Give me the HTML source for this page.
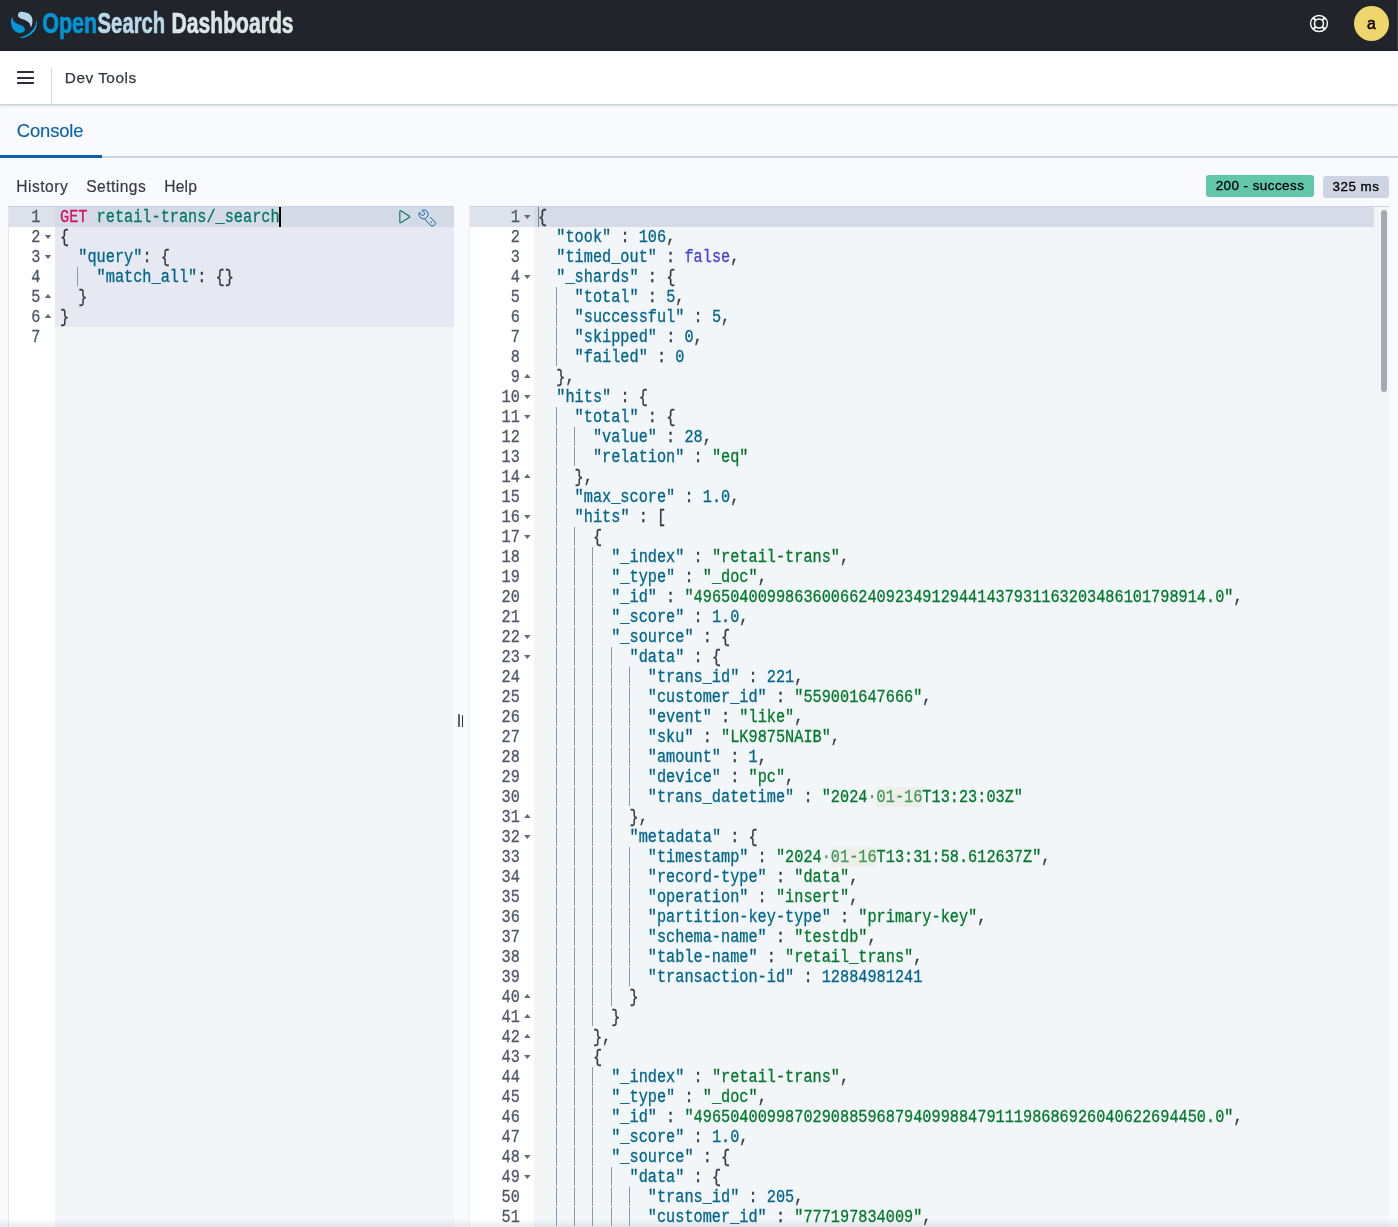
<!DOCTYPE html>
<html lang="en"><head><meta charset="utf-8"><title>Dev Tools - OpenSearch Dashboards</title>
<style>
*{box-sizing:border-box;margin:0;padding:0}
html,body{width:1398px;height:1227px;overflow:hidden;background:#f9fafd}
body{position:relative;font-family:"Liberation Sans",sans-serif;color:#343741}
#root{position:absolute;left:0;top:0;width:1398px;height:1227px;overflow:hidden;will-change:transform}
.abs{position:absolute}
#hdr{position:absolute;left:0;top:0;width:1398px;height:51px;background:#21242b;border-bottom:1px solid #16181d}
#bar{position:absolute;left:0;top:51px;width:1398px;height:53px;background:#fff;box-shadow:0 1px 2px rgba(152,162,179,.55),0 2px 3px rgba(152,162,179,.18)}
#burger i{position:absolute;left:17px;width:17px;height:2.35px;background:#2b2e38;display:block;border-radius:.4px}
#vdiv{position:absolute;left:51px;top:68px;width:1px;height:36px;background:#d3dae6}
.t{position:absolute;white-space:nowrap;line-height:1}
#tabline{position:absolute;left:0;top:156px;width:1398px;height:2px;background:#cdd4e1}
#tabsel{position:absolute;left:0;top:155px;width:102px;height:3px;background:#0a5fa8}
.badge{position:absolute;border-radius:3px;font-size:13.4px;color:#000;white-space:nowrap;line-height:1;text-align:center}
.mono,.ln,.gn{font-family:"Liberation Mono",monospace;font-size:18px;line-height:20px;height:20px;white-space:pre}
.ln{position:absolute;transform:scaleX(0.84708);transform-origin:0 0;padding-top:1.4px;color:#343741}
.gn{position:absolute;text-align:right;color:#4f5868;padding-top:1.4px;transform:scaleX(0.84708);transform-origin:100% 0}
.ln,.gn{-webkit-text-stroke:0.3px currentColor}
.gni{display:inline-block}
.k{color:#00658c}.s{color:#01782b}.n{color:#00658c}.b{color:#4a3fd6}.p{color:#343741}
.qk{color:#005c82}.qs{color:#017026}
.m{color:#d40f66}.u{color:#00776b}
.hl{background:#eeeeea;color:#3f9a57}.hd{color:#4a9c5f}
.ig{position:absolute;width:1px;height:19px;background:#8f96aa}
.fd{position:absolute;width:6.6px;height:4px;background:#6a6a6d;clip-path:polygon(0 0,100% 0,50% 100%)}
.fu{position:absolute;width:6.6px;height:4px;background:#6a6a6d;clip-path:polygon(0 100%,100% 100%,50% 0)}
</style></head>
<body>
<div id="root">
<div id="hdr"></div>

<svg class="abs" style="left:0;top:0" width="320" height="51" viewBox="0 0 320 51">
  <!-- mark -->
  <path d="M17.90 15.30 C17.78 14.38 18.50 13.20 19.20 12.60 C19.90 12.00 20.68 11.62 22.10 11.70 C23.52 11.78 26.22 12.42 27.70 13.10 C29.18 13.78 30.22 14.75 31.00 15.80 C31.78 16.85 32.20 18.12 32.40 19.40 C32.60 20.68 32.45 22.23 32.20 23.50 C31.95 24.77 31.35 27.03 30.90 27.00 C30.45 26.97 30.35 24.38 29.50 23.30 C28.65 22.23 27.40 21.42 25.80 20.55 C24.20 19.68 21.22 18.98 19.90 18.10 C18.58 17.23 18.02 16.22 17.90 15.30 Z" fill="#b4d6ea"/>
  <path d="M12.35 17.20 C11.82 17.30 10.93 20.35 10.90 22.10 C10.88 23.85 11.52 26.18 12.20 27.70 C12.88 29.22 13.87 30.33 15.00 31.20 C16.13 32.07 17.62 32.72 19.00 32.90 C20.38 33.08 22.32 32.87 23.30 32.30 C24.28 31.73 24.90 30.48 24.90 29.50 C24.90 28.52 24.38 27.27 23.30 26.40 C22.22 25.53 19.94 25.12 18.40 24.30 C16.86 23.48 15.06 22.68 14.05 21.50 C13.04 20.32 12.88 17.10 12.35 17.20 Z" fill="#0096d8"/>
  <path d="M36.90 20.90 C36.83 22.13 36.80 26.43 35.90 28.60 C35.00 30.77 33.15 32.50 31.50 33.90 C29.85 35.30 27.82 36.32 26.00 37.00 C24.18 37.68 21.45 37.98 20.60 38.00 C19.75 38.02 20.08 37.52 20.90 37.10 C21.72 36.68 23.95 36.28 25.50 35.50 C27.05 34.72 28.73 33.68 30.20 32.40 C31.67 31.12 33.28 29.67 34.30 27.80 C35.32 25.93 35.87 22.35 36.30 21.20 C36.73 20.05 36.97 19.67 36.90 20.90 Z" fill="#00a3e4"/>
  <g font-family="Liberation Sans, sans-serif" font-weight="bold" font-size="30.2" stroke-width="0.7" stroke-linejoin="round">
    <text x="42.2" y="32.7" fill="#0096d6" stroke="#0096d6" textLength="55" lengthAdjust="spacingAndGlyphs">Open</text>
    <text x="97.6" y="32.7" fill="#b9d9eb" stroke="#b9d9eb" textLength="67.6" lengthAdjust="spacingAndGlyphs">Search</text>
    <text x="171.6" y="32.7" fill="#dfe5e6" stroke="#dfe5e6" textLength="122" lengthAdjust="spacingAndGlyphs">Dashboards</text>
  </g>
</svg>


<svg class="abs" style="left:1308px;top:13px" width="22" height="22" viewBox="0 0 22 22" fill="none" stroke="#fff">
  <ellipse cx="11" cy="10.5" rx="8.45" ry="8.0" stroke-width="1.35"/>
  <circle cx="11" cy="10.5" r="4.5" stroke-width="1.5"/>
  <path d="M14.54 14.04 L16.66 16.16 M7.46 14.04 L5.34 16.16 M7.46 6.96 L5.34 4.84 M14.54 6.96 L16.66 4.84" stroke-width="2.1"/>
</svg>

<div class="abs" style="left:1353.7px;top:5.7px;width:35.6px;height:35.6px;border-radius:50%;background:#f0d46c"></div>
<div class="t" id="ava" style="left:1367px;top:16.45px;font-size:15.9px;color:#000;-webkit-text-stroke:.5px #000">a</div>
<div class="abs" style="left:1397px;top:0;width:1px;height:50px;background:#3b3e45"></div>
<div id="bar"></div>
<div id="burger"><i style="top:71px"></i><i style="top:76.55px"></i><i style="top:82.1px"></i></div>
<div id="vdiv"></div>
<div class="t" id="devtools" style="left:64.8px;top:70.15px;font-size:15.4px;color:#343741;letter-spacing:0.5px;-webkit-text-stroke:.25px #343741">Dev Tools</div>
<div id="tabline"></div><div id="tabsel"></div>
<div class="t" id="console" style="left:16.8px;top:121.6px;font-size:18.4px;letter-spacing:-.12px;color:#0a62ad;-webkit-text-stroke:.15px #0a62ad">Console</div>
<div class="t" id="tHistory" style="left:16.2px;top:178.8px;font-size:15.6px;letter-spacing:.5px;-webkit-text-stroke:.15px #343741">History</div>
<div class="t" id="tSettings" style="left:86.2px;top:178.8px;font-size:15.6px;letter-spacing:.45px;-webkit-text-stroke:.15px #343741">Settings</div>
<div class="t" id="tHelp" style="left:164.2px;top:178.8px;font-size:15.6px;letter-spacing:.2px;-webkit-text-stroke:.15px #343741">Help</div>
<div class="badge" id="b1" style="left:1206px;top:175px;width:108px;height:22px;background:#62c6ab;padding-top:4.2px;letter-spacing:.46px;-webkit-text-stroke:.3px #000">200 - success</div>
<div class="badge" id="b2" style="left:1323px;top:176px;width:66px;height:22px;background:#ced4e2;padding-top:4.2px;letter-spacing:.48px;-webkit-text-stroke:.3px #000">325 ms</div>
<div class="abs" style="left:8px;top:206px;width:446px;height:1021px;background:#f3f6f9"></div>
<div class="abs" style="left:8px;top:206px;width:47px;height:1021px;background:#fff"></div>
<div class="abs" style="left:55px;top:206px;width:399px;height:120.9px;background:#e6e9f1"></div>
<div class="abs" style="left:8px;top:206px;width:47px;height:20.7px;background:#dde1ea"></div>
<div class="abs" style="left:55px;top:206px;width:399px;height:20.7px;background:#d4dae6"></div>
<div class="abs" style="left:8px;top:206px;width:446px;height:1px;background:#cbd2df"></div>
<div class="abs" style="left:8px;top:207px;width:1px;height:1020px;background:#e3e7ef"></div>
<div class="gn" style="top:206px;left:8.00px;width:32.50px">1</div>
<div class="ln" style="top:206px;left:59.90px"><span class="m">GET</span> <span class="u">retail-trans/_search</span></div>
<div class="gn" style="top:226px;left:8.00px;width:32.50px">2</div>
<div class="fd" style="left:44.70px;top:234.90px"></div>
<div class="ln" style="top:226px;left:59.90px"><span class="p">{</span></div>
<div class="gn" style="top:246px;left:8.00px;width:32.50px">3</div>
<div class="fd" style="left:44.70px;top:254.90px"></div>
<div class="ln" style="top:246px;left:59.90px">  <span class="qk">"</span><span class="k">query</span><span class="qk">"</span><span class="p">: </span><span class="p">{</span></div>
<div class="gn" style="top:266px;left:8.00px;width:32.50px">4</div>
<div class="ln" style="top:266px;left:59.90px">    <span class="qk">"</span><span class="k">match_all</span><span class="qk">"</span><span class="p">: </span><span class="p">{</span><span class="p">}</span></div>
<div class="ig" style="left:77px;top:267px"></div>
<div class="gn" style="top:286px;left:8.00px;width:32.50px">5</div>
<div class="fu" style="left:44.70px;top:293.90px"></div>
<div class="ln" style="top:286px;left:59.90px">  <span class="p">}</span></div>
<div class="gn" style="top:306px;left:8.00px;width:32.50px">6</div>
<div class="fu" style="left:44.70px;top:313.90px"></div>
<div class="ln" style="top:306px;left:59.90px"><span class="p">}</span></div>
<div class="gn" style="top:326px;left:8.00px;width:32.50px">7</div>
<div class="abs" style="left:279.00px;top:206.5px;width:1.6px;height:20px;background:#000"></div>

<svg class="abs" style="left:396px;top:207px" width="18" height="19" viewBox="0 0 18 19" fill="none" stroke="#00776c" stroke-width="1.15" stroke-linejoin="round">
  <path d="M3.85 4.7 Q3.85 3.1 5.2 3.95 L13.1 8.95 Q14.3 9.7 13.1 10.45 L5.2 15.45 Q3.85 16.3 3.85 14.7 Z"/>
</svg>
<svg class="abs" style="left:417px;top:208px" width="20" height="20" viewBox="-1 -1 20 20" fill="none" stroke="#0a64b0" stroke-width="1.0" stroke-linecap="round" stroke-linejoin="round">
  <path d="M1.90 3.70 C1.53 3.45 1.26 3.80 1.10 4.20 C0.94 4.60 0.67 5.30 0.95 6.10 C1.23 6.90 1.94 8.37 2.80 9.00 C3.66 9.63 5.02 10.07 6.10 9.90 C7.18 9.73 8.62 8.82 9.30 8.00 C9.98 7.18 10.32 6.00 10.20 5.00 C10.08 4.00 9.35 2.67 8.60 2.00 C7.85 1.33 6.50 1.00 5.70 0.95 C4.90 0.90 3.87 1.44 3.80 1.70 C3.73 1.96 4.85 2.07 5.30 2.50 C5.75 2.93 6.37 3.75 6.50 4.30 C6.63 4.85 6.42 5.45 6.10 5.80 C5.78 6.15 5.07 6.42 4.60 6.40 C4.13 6.38 3.75 6.15 3.30 5.70 C2.85 5.25 2.27 3.95 1.90 3.70 Z"/>
  <path d="M7.2 10.6 L12.9 16.7 C14.2 17.5 16.2 17.0 17.0 15.4 C17.5 14.4 17.4 13.6 16.95 13.0 L12.3 8.35"/>
  <circle cx="13.15" cy="13.3" r="0.8" fill="#0a64b0" stroke="none"/>
</svg>

<div class="abs" style="left:469px;top:206px;width:1px;height:1021px;background:#e9edf3"></div>
<div class="abs" style="left:458.1px;top:714.2px;width:1.9px;height:12.8px;background:#60646e;border-radius:.6px"></div>
<div class="abs" style="left:461.8px;top:714.6px;width:1.4px;height:12.6px;background:#2d313b;border-radius:.6px"></div>
<div class="abs" style="left:470px;top:206px;width:919px;height:1021px;background:#f3f6f9"></div>
<div class="abs" style="left:470px;top:206px;width:64.3px;height:1021px;background:#fff"></div>
<div class="abs" style="left:470px;top:206px;width:64.3px;height:20.7px;background:#dfe3ec"></div>
<div class="abs" style="left:534.3px;top:206px;width:839.7px;height:20.7px;background:#d6dbe7"></div>
<div class="abs" style="left:470px;top:206px;width:919px;height:1px;background:#cbd2df"></div>
<div class="abs" style="left:538.3px;top:206.5px;width:1.2px;height:20px;background:#7d828e"></div>
<div class="gn" style="top:206px;left:470.00px;width:49.80px">1</div>
<div class="fd" style="left:524.00px;top:214.90px"></div>
<div class="ln" style="top:206px;left:538.00px"><span class="p">{</span></div>
<div class="gn" style="top:226px;left:470.00px;width:49.80px">2</div>
<div class="ln" style="top:226px;left:538.00px">  <span class="qk">"</span><span class="k">took</span><span class="qk">"</span><span class="p"> : </span><span class="n">106</span><span class="p">,</span></div>
<div class="gn" style="top:246px;left:470.00px;width:49.80px">3</div>
<div class="ln" style="top:246px;left:538.00px">  <span class="qk">"</span><span class="k">timed_out</span><span class="qk">"</span><span class="p"> : </span><span class="b">false</span><span class="p">,</span></div>
<div class="gn" style="top:266px;left:470.00px;width:49.80px">4</div>
<div class="fd" style="left:524.00px;top:274.90px"></div>
<div class="ln" style="top:266px;left:538.00px">  <span class="qk">"</span><span class="k">_shards</span><span class="qk">"</span><span class="p"> : </span><span class="p">{</span></div>
<div class="gn" style="top:286px;left:470.00px;width:49.80px">5</div>
<div class="ln" style="top:286px;left:538.00px">    <span class="qk">"</span><span class="k">total</span><span class="qk">"</span><span class="p"> : </span><span class="n">5</span><span class="p">,</span></div>
<div class="ig" style="left:556px;top:287px"></div>
<div class="gn" style="top:306px;left:470.00px;width:49.80px">6</div>
<div class="ln" style="top:306px;left:538.00px">    <span class="qk">"</span><span class="k">successful</span><span class="qk">"</span><span class="p"> : </span><span class="n">5</span><span class="p">,</span></div>
<div class="ig" style="left:556px;top:307px"></div>
<div class="gn" style="top:326px;left:470.00px;width:49.80px">7</div>
<div class="ln" style="top:326px;left:538.00px">    <span class="qk">"</span><span class="k">skipped</span><span class="qk">"</span><span class="p"> : </span><span class="n">0</span><span class="p">,</span></div>
<div class="ig" style="left:556px;top:327px"></div>
<div class="gn" style="top:346px;left:470.00px;width:49.80px">8</div>
<div class="ln" style="top:346px;left:538.00px">    <span class="qk">"</span><span class="k">failed</span><span class="qk">"</span><span class="p"> : </span><span class="n">0</span></div>
<div class="ig" style="left:556px;top:347px"></div>
<div class="gn" style="top:366px;left:470.00px;width:49.80px">9</div>
<div class="fu" style="left:524.00px;top:373.90px"></div>
<div class="ln" style="top:366px;left:538.00px">  <span class="p">}</span><span class="p">,</span></div>
<div class="gn" style="top:386px;left:470.00px;width:49.80px">10</div>
<div class="fd" style="left:524.00px;top:394.90px"></div>
<div class="ln" style="top:386px;left:538.00px">  <span class="qk">"</span><span class="k">hits</span><span class="qk">"</span><span class="p"> : </span><span class="p">{</span></div>
<div class="gn" style="top:406px;left:470.00px;width:49.80px">11</div>
<div class="fd" style="left:524.00px;top:414.90px"></div>
<div class="ln" style="top:406px;left:538.00px">    <span class="qk">"</span><span class="k">total</span><span class="qk">"</span><span class="p"> : </span><span class="p">{</span></div>
<div class="ig" style="left:556px;top:407px"></div>
<div class="gn" style="top:426px;left:470.00px;width:49.80px">12</div>
<div class="ln" style="top:426px;left:538.00px">      <span class="qk">"</span><span class="k">value</span><span class="qk">"</span><span class="p"> : </span><span class="n">28</span><span class="p">,</span></div>
<div class="ig" style="left:556px;top:427px"></div>
<div class="ig" style="left:574px;top:427px"></div>
<div class="gn" style="top:446px;left:470.00px;width:49.80px">13</div>
<div class="ln" style="top:446px;left:538.00px">      <span class="qk">"</span><span class="k">relation</span><span class="qk">"</span><span class="p"> : </span><span class="qs">"</span><span class="s">eq</span><span class="qs">"</span></div>
<div class="ig" style="left:556px;top:447px"></div>
<div class="ig" style="left:574px;top:447px"></div>
<div class="gn" style="top:466px;left:470.00px;width:49.80px">14</div>
<div class="fu" style="left:524.00px;top:473.90px"></div>
<div class="ln" style="top:466px;left:538.00px">    <span class="p">}</span><span class="p">,</span></div>
<div class="ig" style="left:556px;top:467px"></div>
<div class="gn" style="top:486px;left:470.00px;width:49.80px">15</div>
<div class="ln" style="top:486px;left:538.00px">    <span class="qk">"</span><span class="k">max_score</span><span class="qk">"</span><span class="p"> : </span><span class="n">1.0</span><span class="p">,</span></div>
<div class="ig" style="left:556px;top:487px"></div>
<div class="gn" style="top:506px;left:470.00px;width:49.80px">16</div>
<div class="fd" style="left:524.00px;top:514.90px"></div>
<div class="ln" style="top:506px;left:538.00px">    <span class="qk">"</span><span class="k">hits</span><span class="qk">"</span><span class="p"> : </span><span class="p">[</span></div>
<div class="ig" style="left:556px;top:507px"></div>
<div class="gn" style="top:526px;left:470.00px;width:49.80px">17</div>
<div class="fd" style="left:524.00px;top:534.90px"></div>
<div class="ln" style="top:526px;left:538.00px">      <span class="p">{</span></div>
<div class="ig" style="left:556px;top:527px"></div>
<div class="ig" style="left:574px;top:527px"></div>
<div class="gn" style="top:546px;left:470.00px;width:49.80px">18</div>
<div class="ln" style="top:546px;left:538.00px">        <span class="qk">"</span><span class="k">_index</span><span class="qk">"</span><span class="p"> : </span><span class="qs">"</span><span class="s">retail-trans</span><span class="qs">"</span><span class="p">,</span></div>
<div class="ig" style="left:556px;top:547px"></div>
<div class="ig" style="left:574px;top:547px"></div>
<div class="ig" style="left:592px;top:547px"></div>
<div class="gn" style="top:566px;left:470.00px;width:49.80px">19</div>
<div class="ln" style="top:566px;left:538.00px">        <span class="qk">"</span><span class="k">_type</span><span class="qk">"</span><span class="p"> : </span><span class="qs">"</span><span class="s">_doc</span><span class="qs">"</span><span class="p">,</span></div>
<div class="ig" style="left:556px;top:567px"></div>
<div class="ig" style="left:574px;top:567px"></div>
<div class="ig" style="left:592px;top:567px"></div>
<div class="gn" style="top:586px;left:470.00px;width:49.80px">20</div>
<div class="ln" style="top:586px;left:538.00px">        <span class="qk">"</span><span class="k">_id</span><span class="qk">"</span><span class="p"> : </span><span class="qs">"</span><span class="s">49650400998636006624092349129441437931163203486101798914.0</span><span class="qs">"</span><span class="p">,</span></div>
<div class="ig" style="left:556px;top:587px"></div>
<div class="ig" style="left:574px;top:587px"></div>
<div class="ig" style="left:592px;top:587px"></div>
<div class="gn" style="top:606px;left:470.00px;width:49.80px">21</div>
<div class="ln" style="top:606px;left:538.00px">        <span class="qk">"</span><span class="k">_score</span><span class="qk">"</span><span class="p"> : </span><span class="n">1.0</span><span class="p">,</span></div>
<div class="ig" style="left:556px;top:607px"></div>
<div class="ig" style="left:574px;top:607px"></div>
<div class="ig" style="left:592px;top:607px"></div>
<div class="gn" style="top:626px;left:470.00px;width:49.80px">22</div>
<div class="fd" style="left:524.00px;top:634.90px"></div>
<div class="ln" style="top:626px;left:538.00px">        <span class="qk">"</span><span class="k">_source</span><span class="qk">"</span><span class="p"> : </span><span class="p">{</span></div>
<div class="ig" style="left:556px;top:627px"></div>
<div class="ig" style="left:574px;top:627px"></div>
<div class="ig" style="left:592px;top:627px"></div>
<div class="gn" style="top:646px;left:470.00px;width:49.80px">23</div>
<div class="fd" style="left:524.00px;top:654.90px"></div>
<div class="ln" style="top:646px;left:538.00px">          <span class="qk">"</span><span class="k">data</span><span class="qk">"</span><span class="p"> : </span><span class="p">{</span></div>
<div class="ig" style="left:556px;top:647px"></div>
<div class="ig" style="left:574px;top:647px"></div>
<div class="ig" style="left:592px;top:647px"></div>
<div class="ig" style="left:611px;top:647px"></div>
<div class="gn" style="top:666px;left:470.00px;width:49.80px">24</div>
<div class="ln" style="top:666px;left:538.00px">            <span class="qk">"</span><span class="k">trans_id</span><span class="qk">"</span><span class="p"> : </span><span class="n">221</span><span class="p">,</span></div>
<div class="ig" style="left:556px;top:667px"></div>
<div class="ig" style="left:574px;top:667px"></div>
<div class="ig" style="left:592px;top:667px"></div>
<div class="ig" style="left:611px;top:667px"></div>
<div class="ig" style="left:629px;top:667px"></div>
<div class="gn" style="top:686px;left:470.00px;width:49.80px">25</div>
<div class="ln" style="top:686px;left:538.00px">            <span class="qk">"</span><span class="k">customer_id</span><span class="qk">"</span><span class="p"> : </span><span class="qs">"</span><span class="s">559001647666</span><span class="qs">"</span><span class="p">,</span></div>
<div class="ig" style="left:556px;top:687px"></div>
<div class="ig" style="left:574px;top:687px"></div>
<div class="ig" style="left:592px;top:687px"></div>
<div class="ig" style="left:611px;top:687px"></div>
<div class="ig" style="left:629px;top:687px"></div>
<div class="gn" style="top:706px;left:470.00px;width:49.80px">26</div>
<div class="ln" style="top:706px;left:538.00px">            <span class="qk">"</span><span class="k">event</span><span class="qk">"</span><span class="p"> : </span><span class="qs">"</span><span class="s">like</span><span class="qs">"</span><span class="p">,</span></div>
<div class="ig" style="left:556px;top:707px"></div>
<div class="ig" style="left:574px;top:707px"></div>
<div class="ig" style="left:592px;top:707px"></div>
<div class="ig" style="left:611px;top:707px"></div>
<div class="ig" style="left:629px;top:707px"></div>
<div class="gn" style="top:726px;left:470.00px;width:49.80px">27</div>
<div class="ln" style="top:726px;left:538.00px">            <span class="qk">"</span><span class="k">sku</span><span class="qk">"</span><span class="p"> : </span><span class="qs">"</span><span class="s">LK9875NAIB</span><span class="qs">"</span><span class="p">,</span></div>
<div class="ig" style="left:556px;top:727px"></div>
<div class="ig" style="left:574px;top:727px"></div>
<div class="ig" style="left:592px;top:727px"></div>
<div class="ig" style="left:611px;top:727px"></div>
<div class="ig" style="left:629px;top:727px"></div>
<div class="gn" style="top:746px;left:470.00px;width:49.80px">28</div>
<div class="ln" style="top:746px;left:538.00px">            <span class="qk">"</span><span class="k">amount</span><span class="qk">"</span><span class="p"> : </span><span class="n">1</span><span class="p">,</span></div>
<div class="ig" style="left:556px;top:747px"></div>
<div class="ig" style="left:574px;top:747px"></div>
<div class="ig" style="left:592px;top:747px"></div>
<div class="ig" style="left:611px;top:747px"></div>
<div class="ig" style="left:629px;top:747px"></div>
<div class="gn" style="top:766px;left:470.00px;width:49.80px">29</div>
<div class="ln" style="top:766px;left:538.00px">            <span class="qk">"</span><span class="k">device</span><span class="qk">"</span><span class="p"> : </span><span class="qs">"</span><span class="s">pc</span><span class="qs">"</span><span class="p">,</span></div>
<div class="ig" style="left:556px;top:767px"></div>
<div class="ig" style="left:574px;top:767px"></div>
<div class="ig" style="left:592px;top:767px"></div>
<div class="ig" style="left:611px;top:767px"></div>
<div class="ig" style="left:629px;top:767px"></div>
<div class="gn" style="top:786px;left:470.00px;width:49.80px">30</div>
<div class="ln" style="top:786px;left:538.00px">            <span class="qk">"</span><span class="k">trans_datetime</span><span class="qk">"</span><span class="p"> : </span><span class="qs">"</span><span class="s">2024</span><span class="hd">·</span><span class="hl">01-16</span><span class="s">T13:23:03Z</span><span class="qs">"</span></div>
<div class="ig" style="left:556px;top:787px"></div>
<div class="ig" style="left:574px;top:787px"></div>
<div class="ig" style="left:592px;top:787px"></div>
<div class="ig" style="left:611px;top:787px"></div>
<div class="ig" style="left:629px;top:787px"></div>
<div class="gn" style="top:806px;left:470.00px;width:49.80px">31</div>
<div class="fu" style="left:524.00px;top:813.90px"></div>
<div class="ln" style="top:806px;left:538.00px">          <span class="p">}</span><span class="p">,</span></div>
<div class="ig" style="left:556px;top:807px"></div>
<div class="ig" style="left:574px;top:807px"></div>
<div class="ig" style="left:592px;top:807px"></div>
<div class="ig" style="left:611px;top:807px"></div>
<div class="gn" style="top:826px;left:470.00px;width:49.80px">32</div>
<div class="fd" style="left:524.00px;top:834.90px"></div>
<div class="ln" style="top:826px;left:538.00px">          <span class="qk">"</span><span class="k">metadata</span><span class="qk">"</span><span class="p"> : </span><span class="p">{</span></div>
<div class="ig" style="left:556px;top:827px"></div>
<div class="ig" style="left:574px;top:827px"></div>
<div class="ig" style="left:592px;top:827px"></div>
<div class="ig" style="left:611px;top:827px"></div>
<div class="gn" style="top:846px;left:470.00px;width:49.80px">33</div>
<div class="ln" style="top:846px;left:538.00px">            <span class="qk">"</span><span class="k">timestamp</span><span class="qk">"</span><span class="p"> : </span><span class="qs">"</span><span class="s">2024</span><span class="hd">·</span><span class="hl">01-16</span><span class="s">T13:31:58.612637Z</span><span class="qs">"</span><span class="p">,</span></div>
<div class="ig" style="left:556px;top:847px"></div>
<div class="ig" style="left:574px;top:847px"></div>
<div class="ig" style="left:592px;top:847px"></div>
<div class="ig" style="left:611px;top:847px"></div>
<div class="ig" style="left:629px;top:847px"></div>
<div class="gn" style="top:866px;left:470.00px;width:49.80px">34</div>
<div class="ln" style="top:866px;left:538.00px">            <span class="qk">"</span><span class="k">record-type</span><span class="qk">"</span><span class="p"> : </span><span class="qs">"</span><span class="s">data</span><span class="qs">"</span><span class="p">,</span></div>
<div class="ig" style="left:556px;top:867px"></div>
<div class="ig" style="left:574px;top:867px"></div>
<div class="ig" style="left:592px;top:867px"></div>
<div class="ig" style="left:611px;top:867px"></div>
<div class="ig" style="left:629px;top:867px"></div>
<div class="gn" style="top:886px;left:470.00px;width:49.80px">35</div>
<div class="ln" style="top:886px;left:538.00px">            <span class="qk">"</span><span class="k">operation</span><span class="qk">"</span><span class="p"> : </span><span class="qs">"</span><span class="s">insert</span><span class="qs">"</span><span class="p">,</span></div>
<div class="ig" style="left:556px;top:887px"></div>
<div class="ig" style="left:574px;top:887px"></div>
<div class="ig" style="left:592px;top:887px"></div>
<div class="ig" style="left:611px;top:887px"></div>
<div class="ig" style="left:629px;top:887px"></div>
<div class="gn" style="top:906px;left:470.00px;width:49.80px">36</div>
<div class="ln" style="top:906px;left:538.00px">            <span class="qk">"</span><span class="k">partition-key-type</span><span class="qk">"</span><span class="p"> : </span><span class="qs">"</span><span class="s">primary-key</span><span class="qs">"</span><span class="p">,</span></div>
<div class="ig" style="left:556px;top:907px"></div>
<div class="ig" style="left:574px;top:907px"></div>
<div class="ig" style="left:592px;top:907px"></div>
<div class="ig" style="left:611px;top:907px"></div>
<div class="ig" style="left:629px;top:907px"></div>
<div class="gn" style="top:926px;left:470.00px;width:49.80px">37</div>
<div class="ln" style="top:926px;left:538.00px">            <span class="qk">"</span><span class="k">schema-name</span><span class="qk">"</span><span class="p"> : </span><span class="qs">"</span><span class="s">testdb</span><span class="qs">"</span><span class="p">,</span></div>
<div class="ig" style="left:556px;top:927px"></div>
<div class="ig" style="left:574px;top:927px"></div>
<div class="ig" style="left:592px;top:927px"></div>
<div class="ig" style="left:611px;top:927px"></div>
<div class="ig" style="left:629px;top:927px"></div>
<div class="gn" style="top:946px;left:470.00px;width:49.80px">38</div>
<div class="ln" style="top:946px;left:538.00px">            <span class="qk">"</span><span class="k">table-name</span><span class="qk">"</span><span class="p"> : </span><span class="qs">"</span><span class="s">retail_trans</span><span class="qs">"</span><span class="p">,</span></div>
<div class="ig" style="left:556px;top:947px"></div>
<div class="ig" style="left:574px;top:947px"></div>
<div class="ig" style="left:592px;top:947px"></div>
<div class="ig" style="left:611px;top:947px"></div>
<div class="ig" style="left:629px;top:947px"></div>
<div class="gn" style="top:966px;left:470.00px;width:49.80px">39</div>
<div class="ln" style="top:966px;left:538.00px">            <span class="qk">"</span><span class="k">transaction-id</span><span class="qk">"</span><span class="p"> : </span><span class="n">12884981241</span></div>
<div class="ig" style="left:556px;top:967px"></div>
<div class="ig" style="left:574px;top:967px"></div>
<div class="ig" style="left:592px;top:967px"></div>
<div class="ig" style="left:611px;top:967px"></div>
<div class="ig" style="left:629px;top:967px"></div>
<div class="gn" style="top:986px;left:470.00px;width:49.80px">40</div>
<div class="fu" style="left:524.00px;top:993.90px"></div>
<div class="ln" style="top:986px;left:538.00px">          <span class="p">}</span></div>
<div class="ig" style="left:556px;top:987px"></div>
<div class="ig" style="left:574px;top:987px"></div>
<div class="ig" style="left:592px;top:987px"></div>
<div class="ig" style="left:611px;top:987px"></div>
<div class="gn" style="top:1006px;left:470.00px;width:49.80px">41</div>
<div class="fu" style="left:524.00px;top:1013.90px"></div>
<div class="ln" style="top:1006px;left:538.00px">        <span class="p">}</span></div>
<div class="ig" style="left:556px;top:1007px"></div>
<div class="ig" style="left:574px;top:1007px"></div>
<div class="ig" style="left:592px;top:1007px"></div>
<div class="gn" style="top:1026px;left:470.00px;width:49.80px">42</div>
<div class="fu" style="left:524.00px;top:1033.90px"></div>
<div class="ln" style="top:1026px;left:538.00px">      <span class="p">}</span><span class="p">,</span></div>
<div class="ig" style="left:556px;top:1027px"></div>
<div class="ig" style="left:574px;top:1027px"></div>
<div class="gn" style="top:1046px;left:470.00px;width:49.80px">43</div>
<div class="fd" style="left:524.00px;top:1054.90px"></div>
<div class="ln" style="top:1046px;left:538.00px">      <span class="p">{</span></div>
<div class="ig" style="left:556px;top:1047px"></div>
<div class="ig" style="left:574px;top:1047px"></div>
<div class="gn" style="top:1066px;left:470.00px;width:49.80px">44</div>
<div class="ln" style="top:1066px;left:538.00px">        <span class="qk">"</span><span class="k">_index</span><span class="qk">"</span><span class="p"> : </span><span class="qs">"</span><span class="s">retail-trans</span><span class="qs">"</span><span class="p">,</span></div>
<div class="ig" style="left:556px;top:1067px"></div>
<div class="ig" style="left:574px;top:1067px"></div>
<div class="ig" style="left:592px;top:1067px"></div>
<div class="gn" style="top:1086px;left:470.00px;width:49.80px">45</div>
<div class="ln" style="top:1086px;left:538.00px">        <span class="qk">"</span><span class="k">_type</span><span class="qk">"</span><span class="p"> : </span><span class="qs">"</span><span class="s">_doc</span><span class="qs">"</span><span class="p">,</span></div>
<div class="ig" style="left:556px;top:1087px"></div>
<div class="ig" style="left:574px;top:1087px"></div>
<div class="ig" style="left:592px;top:1087px"></div>
<div class="gn" style="top:1106px;left:470.00px;width:49.80px">46</div>
<div class="ln" style="top:1106px;left:538.00px">        <span class="qk">"</span><span class="k">_id</span><span class="qk">"</span><span class="p"> : </span><span class="qs">"</span><span class="s">49650400998702908859687940998847911198686926040622694450.0</span><span class="qs">"</span><span class="p">,</span></div>
<div class="ig" style="left:556px;top:1107px"></div>
<div class="ig" style="left:574px;top:1107px"></div>
<div class="ig" style="left:592px;top:1107px"></div>
<div class="gn" style="top:1126px;left:470.00px;width:49.80px">47</div>
<div class="ln" style="top:1126px;left:538.00px">        <span class="qk">"</span><span class="k">_score</span><span class="qk">"</span><span class="p"> : </span><span class="n">1.0</span><span class="p">,</span></div>
<div class="ig" style="left:556px;top:1127px"></div>
<div class="ig" style="left:574px;top:1127px"></div>
<div class="ig" style="left:592px;top:1127px"></div>
<div class="gn" style="top:1146px;left:470.00px;width:49.80px">48</div>
<div class="fd" style="left:524.00px;top:1154.90px"></div>
<div class="ln" style="top:1146px;left:538.00px">        <span class="qk">"</span><span class="k">_source</span><span class="qk">"</span><span class="p"> : </span><span class="p">{</span></div>
<div class="ig" style="left:556px;top:1147px"></div>
<div class="ig" style="left:574px;top:1147px"></div>
<div class="ig" style="left:592px;top:1147px"></div>
<div class="gn" style="top:1166px;left:470.00px;width:49.80px">49</div>
<div class="fd" style="left:524.00px;top:1174.90px"></div>
<div class="ln" style="top:1166px;left:538.00px">          <span class="qk">"</span><span class="k">data</span><span class="qk">"</span><span class="p"> : </span><span class="p">{</span></div>
<div class="ig" style="left:556px;top:1167px"></div>
<div class="ig" style="left:574px;top:1167px"></div>
<div class="ig" style="left:592px;top:1167px"></div>
<div class="ig" style="left:611px;top:1167px"></div>
<div class="gn" style="top:1186px;left:470.00px;width:49.80px">50</div>
<div class="ln" style="top:1186px;left:538.00px">            <span class="qk">"</span><span class="k">trans_id</span><span class="qk">"</span><span class="p"> : </span><span class="n">205</span><span class="p">,</span></div>
<div class="ig" style="left:556px;top:1187px"></div>
<div class="ig" style="left:574px;top:1187px"></div>
<div class="ig" style="left:592px;top:1187px"></div>
<div class="ig" style="left:611px;top:1187px"></div>
<div class="ig" style="left:629px;top:1187px"></div>
<div class="gn" style="top:1206px;left:470.00px;width:49.80px">51</div>
<div class="ln" style="top:1206px;left:538.00px">            <span class="qk">"</span><span class="k">customer_id</span><span class="qk">"</span><span class="p"> : </span><span class="qs">"</span><span class="s">777197834009</span><span class="qs">"</span><span class="p">,</span></div>
<div class="ig" style="left:556px;top:1207px"></div>
<div class="ig" style="left:574px;top:1207px"></div>
<div class="ig" style="left:592px;top:1207px"></div>
<div class="ig" style="left:611px;top:1207px"></div>
<div class="ig" style="left:629px;top:1207px"></div>
<div class="abs" style="left:1381px;top:210px;width:6px;height:182px;border-radius:3px;background:#a5a9b3"></div>
<div class="abs" style="left:0;top:1219px;width:1398px;height:8px;background:linear-gradient(to bottom,rgba(120,126,140,0),rgba(120,126,140,.16))"></div>
</div>
</body></html>
